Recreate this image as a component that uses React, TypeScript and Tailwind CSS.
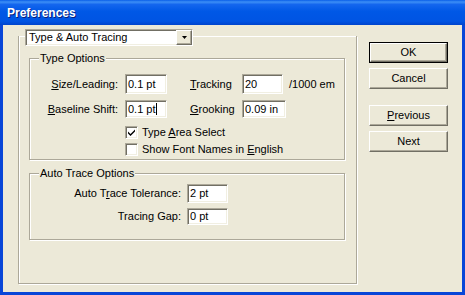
import React from "react";

const sunken =
  "bg-white border border-t-[#aca899] border-l-[#aca899] border-r-white border-b-white shadow-[inset_1px_1px_0_#716f64,inset_-1px_-1px_0_#f1efe2]";
const raised =
  "bg-[#ece9d8] border border-t-white border-l-white border-r-[#716f64] border-b-[#716f64] shadow-[inset_-1px_-1px_0_#aca899]";
const etched = "border-[#aca899] shadow-[inset_1px_1px_0_#fff,1px_1px_0_#fff]";

function U({ c }: { c: string }) {
  return <span className="underline underline-offset-[1px]">{c}</span>;
}

function Field({ w, h, value, caret }: { w: number; h: number; value: string; caret?: boolean }) {
  return (
    <div className={`${sunken} flex items-center pl-[2px] shrink-0`} style={{ width: w, height: h }}>
      <span>{value}</span>
      {caret && <span className="w-px h-[12px] bg-black" />}
    </div>
  );
}

function Check({ checked }: { checked?: boolean }) {
  return (
    <div className={`${sunken} w-[13px] h-[13px] shrink-0 flex items-center justify-center`}>
      {checked && (
        <svg width="9" height="9" viewBox="0 0 9 9">
          <path d="M1 3.5 L3.5 6 L8 1.5 L8 3.5 L3.5 8 L1 5.5 Z" fill="#000" />
        </svg>
      )}
    </div>
  );
}

function Btn({ children, def }: { children: React.ReactNode; def?: boolean }) {
  return (
    <div
      className={`w-[79px] h-[21px] flex items-center justify-center ${
        def ? "border border-black" : ""
      }`}
    >
      <div className={`${raised} w-full h-full flex items-center justify-center`}>{children}</div>
    </div>
  );
}

function Group({ label, className, children }: { label: string; className: string; children: React.ReactNode }) {
  return (
    <div className={`relative border ${etched} ${className}`}>
      <span className="absolute left-[9px] -top-[8px] bg-[#ece9d8] px-[1px] leading-[14px]">{label}</span>
      {children}
    </div>
  );
}

export default function App() {
  return (
    <div className="w-[465px] h-[295px] flex flex-col overflow-hidden font-['Liberation_Sans',Arial,sans-serif] text-[11px] text-black leading-none">
      <div className="h-[25px] shrink-0 flex items-center pl-[7px] bg-[linear-gradient(to_bottom,#0a5ee8_0%,#3d8ff6_8%,#1466ee_18%,#0058e6_45%,#0054e3_85%,#0044cc_100%)]">
        <span className="text-white font-bold text-[12px] [text-shadow:1px_1px_0_#0a1e7a]">Preferences</span>
      </div>
      <div className="flex-1 flex border-x-[3px] border-b-[3px] border-[#0846d8] bg-[#ece9d8]">
        <div className="pl-[15px] pt-[11px]">
          <div className={`w-[339px] h-[248px] border-l border-r border-b ${etched} flex flex-col`}>
            <div className={`${sunken} -mt-[7px] ml-[6px] w-[168px] h-[17px] flex items-center justify-between pl-[3px]`}>
              <span>Type &amp; Auto Tracing</span>
              <div className={`${raised} w-[16px] h-[15px] mr-0 flex items-center justify-center`}>
                <svg width="5" height="3" viewBox="0 0 5 3">
                  <path d="M0 0 H5 L2.5 3 Z" fill="#000" />
                </svg>
              </div>
            </div>

            <Group label="Type Options" className="mt-[12px] ml-[10px] w-[316px] h-[102px] pt-[15px]">
              <div className="flex items-center h-[20px]">
                <span className="w-[88px] text-right">
                  <U c="S" />ize/Leading:
                </span>
                <div className="ml-[7px]">
                  <Field w={42} h={20} value="0.1 pt" />
                </div>
                <span className="ml-[23px] w-[52px]">
                  <U c="T" />racking
                </span>
                <Field w={41} h={20} value="20" />
                <span className="ml-[6px]">/1000 em</span>
              </div>
              <div className="flex items-center h-[18px] mt-[6px]">
                <span className="w-[88px] text-right">
                  <U c="B" />aseline Shift:
                </span>
                <div className="ml-[7px]">
                  <Field w={42} h={18} value="0.1 pt" caret />
                </div>
                <span className="ml-[23px] w-[52px]">
                  <U c="G" />rooking
                </span>
                <Field w={44} h={18} value="0.09 in" />
              </div>
              <div className="flex items-center h-[13px] mt-[8px] pl-[95px] gap-[4px]">
                <Check checked />
                <span>
                  Type <U c="A" />rea Select
                </span>
              </div>
              <div className="flex items-center h-[13px] mt-[4px] pl-[95px] gap-[4px]">
                <Check />
                <span>
                  Show Font Names in <U c="E" />nglish
                </span>
              </div>
            </Group>

            <Group label="Auto Trace Options" className="mt-[13px] ml-[10px] w-[316px] h-[67px] pt-[10px]">
              <div className="flex items-center h-[19px]">
                <span className="w-[151px] text-right">
                  Auto T<U c="r" />ace Tolerance:
                </span>
                <div className="ml-[6px]">
                  <Field w={41} h={19} value="2 pt" />
                </div>
              </div>
              <div className="flex items-center h-[17px] mt-[5px]">
                <span className="w-[151px] text-right">Tracing Gap:</span>
                <div className="ml-[6px]">
                  <Field w={41} h={17} value="0 pt" />
                </div>
              </div>
            </Group>
          </div>
        </div>

        <div className="ml-[12px] pt-[17px] flex flex-col">
          <Btn def>OK</Btn>
          <div className="mt-[5px]">
            <Btn>Cancel</Btn>
          </div>
          <div className="mt-[16px]">
            <Btn>
              <span>
                <U c="P" />revious
              </span>
            </Btn>
          </div>
          <div className="mt-[5px]">
            <Btn>Next</Btn>
          </div>
        </div>
      </div>
    </div>
  );
}
